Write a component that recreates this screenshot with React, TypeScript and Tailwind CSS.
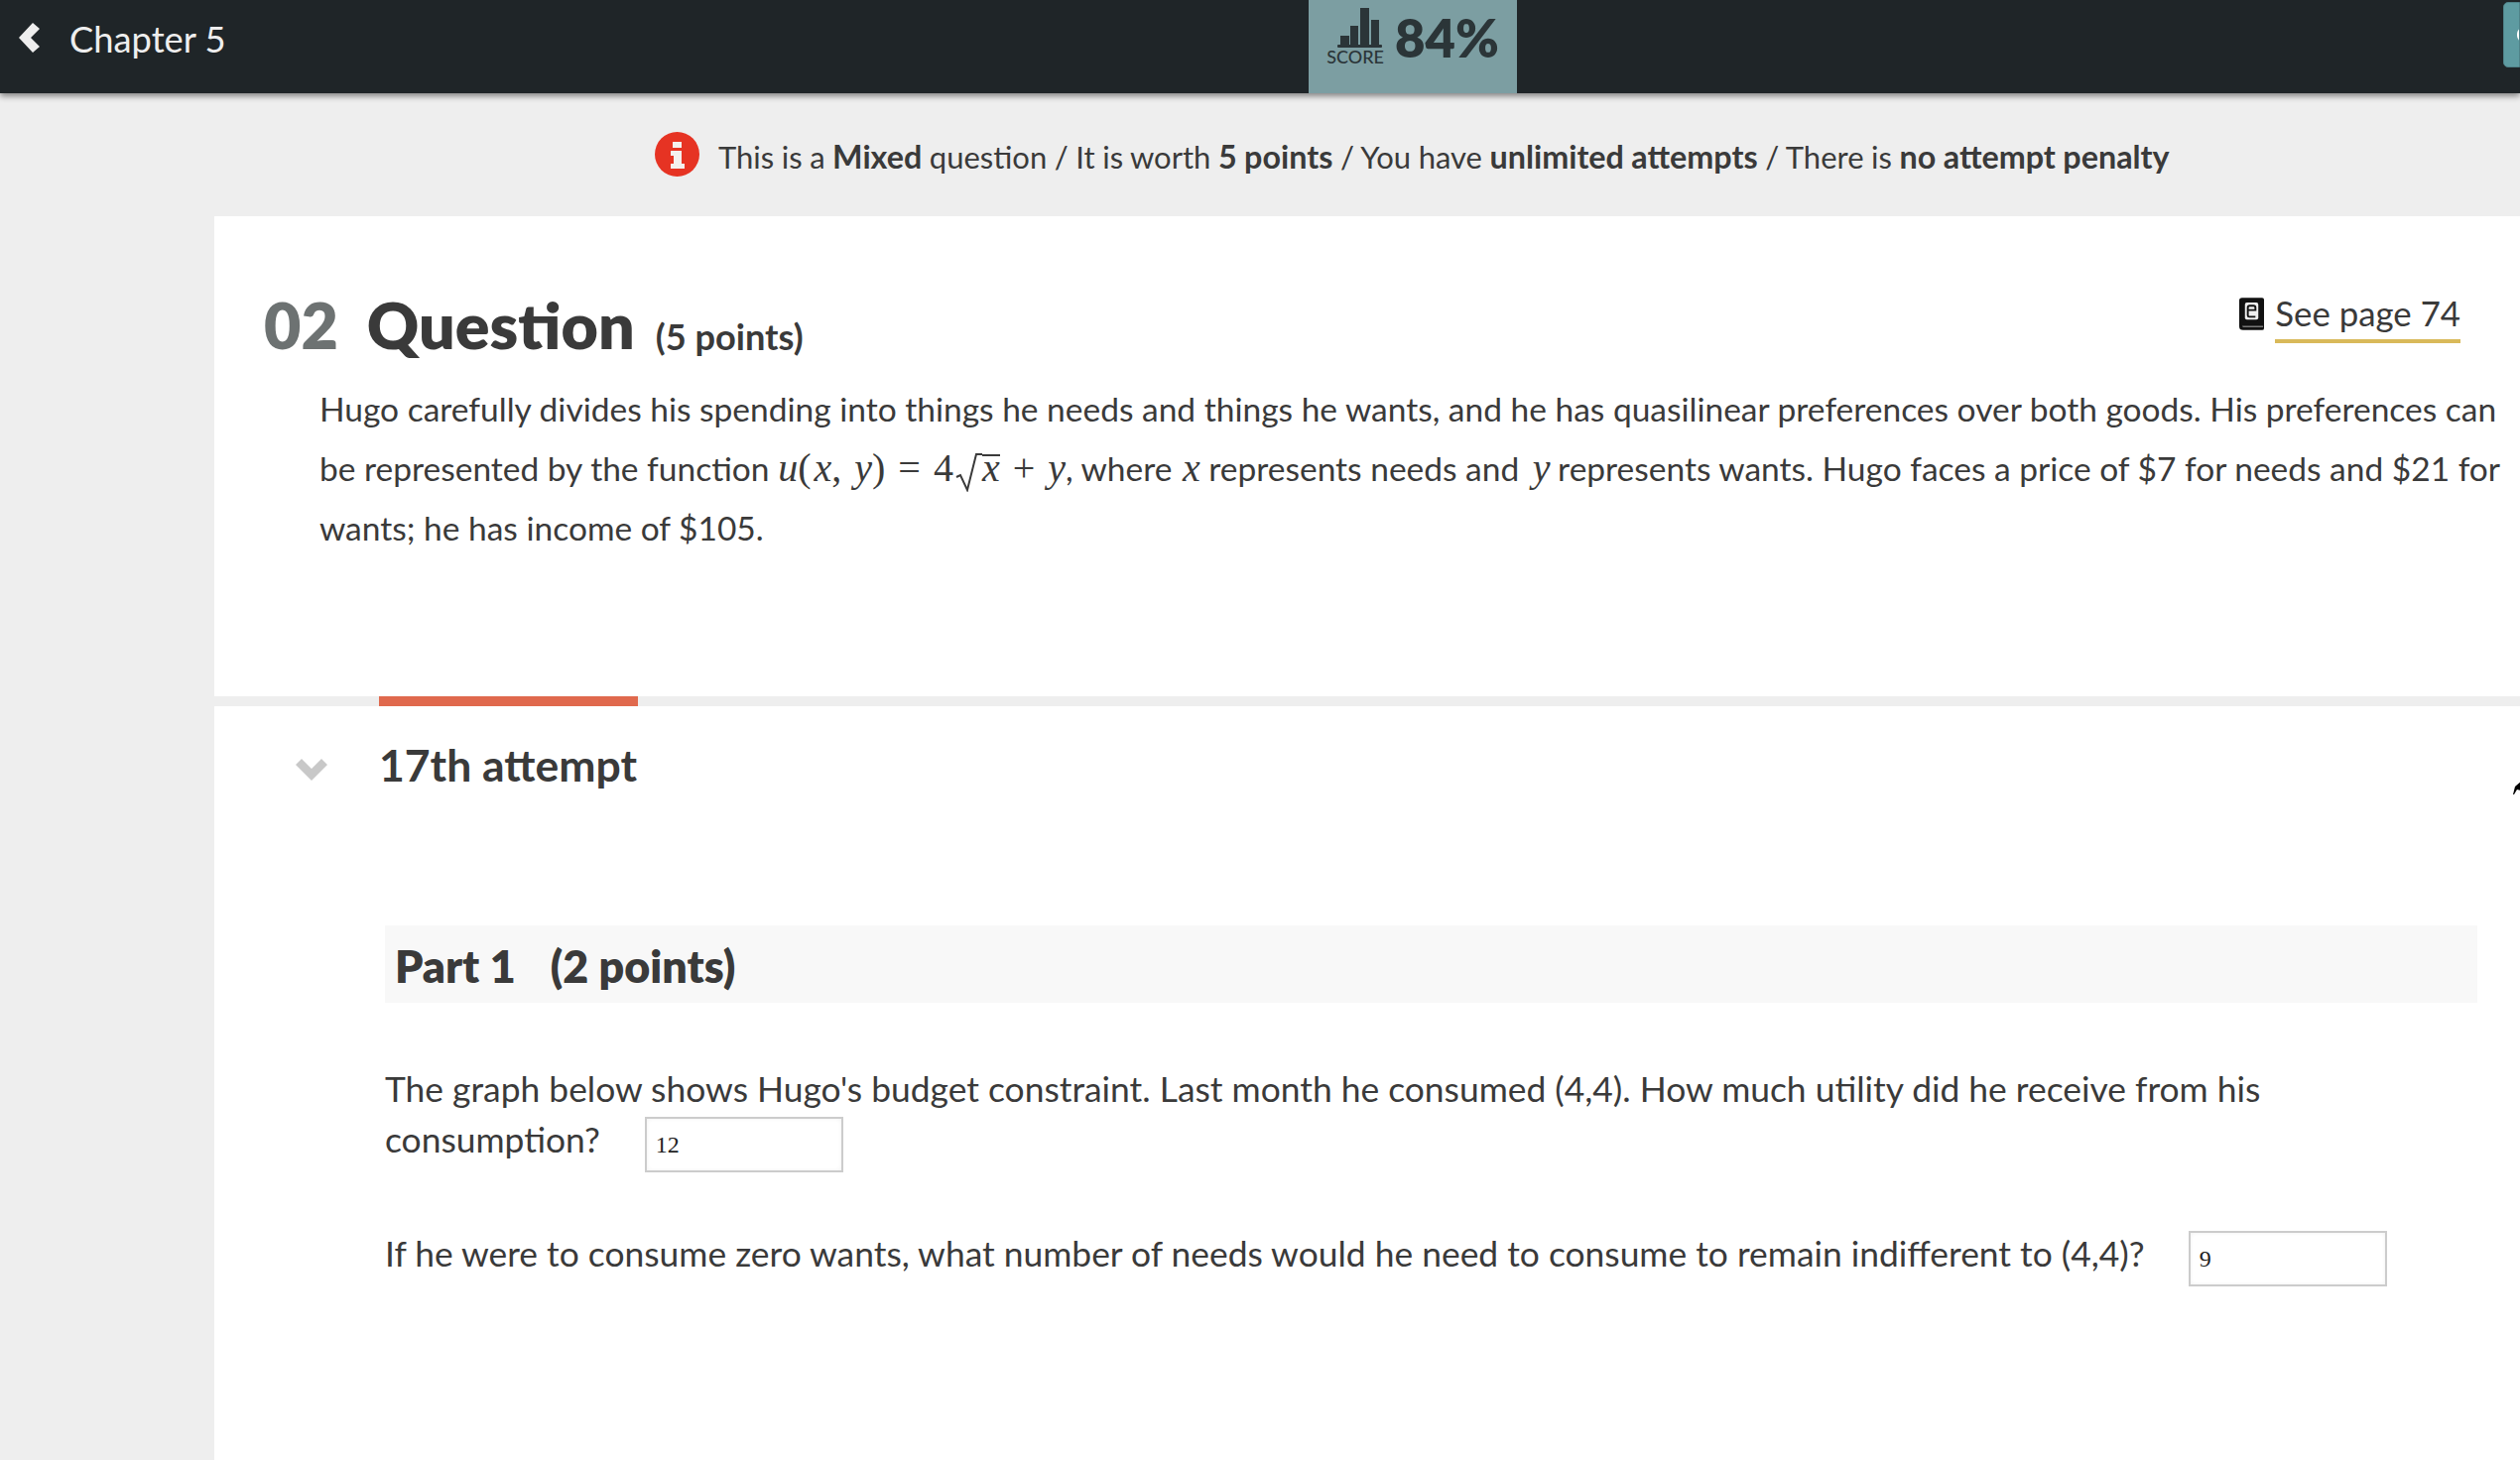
function ScoreBars() {
  return (
    <svg width="45" height="40" viewBox="0 0 45 40" className="block" fill="#2b3538">
      <rect x="3" y="28" width="9" height="10" />
      <rect x="13" y="18" width="8" height="20" />
      <rect x="23" y="0" width="9" height="38" />
      <rect x="34" y="12" width="8" height="26" />
      <rect x="0" y="37" width="45" height="3" rx="1" />
    </svg>
  );
}

function BookIcon() {
  return (
    <svg width="25" height="33" viewBox="0 0 26 34" className="block">
      <path d="M3 0h21a2 2 0 0 1 2 2v30a2 2 0 0 1-2 2H4a4 4 0 0 1-4-4V3a3 3 0 0 1 3-3z" fill="#111" />
      <path d="M3 29.500h22v1.500H4z" fill="#777" />
      <path d="M8 5h10a2 2 0 0 1 2 2v14a2 2 0 0 1-2 2H8a2 2 0 0 1-2-2V7a2 2 0 0 1 2-2z" fill="#eee" />
      <path d="M9 13h8v-2.500a2 2 0 0 0-2-2h-4a2 2 0 0 0-2 2v8a1.500 1.500 0 0 0 1.500 1.500H17" fill="none" stroke="#111" strokeWidth="2" />
    </svg>
  );
}

function Radical() {
  return (
    <svg width="29" height="39" viewBox="0 0 29 39" className="inline-block align-[-11px]" fill="none" stroke="#3a3a3a">
      <path d="M3 24l4-2 7 15L23 1h6" strokeWidth="2" />
    </svg>
  );
}

function Mi({ children }: { children: string }) {
  return <span className="italic">{children}</span>;
}

function Answer({ value }: { value: string }) {
  return (
    <span className="inline-flex items-center w-[200px] h-[56px] border-2 border-[#cccccc] bg-white pl-[9px] align-middle font-['Liberation_Serif',serif] text-[24px] text-[#222] shadow-[inset_0_0_4px_rgba(0,0,0,0.06)]">
      {value}
    </span>
  );
}

export default function App() {
  return (
    <div className="relative flex flex-col w-[2540px] h-[1472px] overflow-hidden bg-[#eeeeee] font-['Lato',sans-serif] text-[#3a3a3a]">
      <header className="relative z-10 flex h-[94px] shrink-0 bg-[#1f2528] shadow-[0_3px_6px_rgba(0,0,0,0.45)]">
        <div className="flex w-[1319px] items-start pl-[19px] pt-[16px] text-[#eeeeee]">
          <svg width="22" height="30" viewBox="0 0 22 30" className="mt-[7px] block" fill="#eeeeee">
            <path d="M0 15L14 0l7 6-9 9 9 9-7 6z" />
          </svg>
          <span className="ml-[29px] text-[36.300px] leading-[46px]">Chapter 5</span>
        </div>
        <div className="flex w-[210px] bg-[#7c9ea2] pl-[19px] text-[#2b3538]">
          <div className="flex w-[57px] flex-col items-end pt-[8px]">
            <div className="mr-[2px]"><ScoreBars /></div>
            <span className="text-[18px] font-medium leading-[18px]">SCORE</span>
          </div>
          <span className="ml-[11px] mt-[6px] text-[52.500px] font-extrabold leading-[64px]">84%</span>
        </div>
        <div className="ml-auto mt-[2px] flex h-[66px] w-[17px] items-center overflow-hidden rounded-l-[5px] border border-[#4f8389] bg-[#5e9ba1] pl-[13px]">
          <span className="h-[14px] w-[6px] shrink-0 rounded-l-full bg-white" />
        </div>
      </header>

      <div className="flex h-[124px] shrink-0 items-start pl-[660px] pt-[39px]">
        <svg width="45" height="45" viewBox="0 0 45 45" className="block">
          <circle cx="22.500" cy="22.500" r="22.500" fill="#e63323" />
          <path d="M18 10h9v6h-9zM16 19h11v13h3v5H16v-5h3v-8h-3z" fill="#f4f0ee" />
        </svg>
        <p className="ml-[19px] mt-[2px] whitespace-nowrap text-[31px] leading-[46px] [word-spacing:-0.4px]">
          This is a <b className="text-[32.300px]">Mixed</b> question / It is worth <b className="text-[32.300px]">5 points</b> / You have <b className="text-[32.300px]">unlimited attempts</b> / There is <b className="text-[32.300px]">no attempt penalty</b>
        </p>
      </div>

      <main className="ml-[216px] flex-1 bg-white">
        <section className="h-[484px] pl-[50px] pr-[22px]">
          <div className="flex items-start pt-[69px]">
            <h1 className="text-[64.500px] font-extrabold leading-[80px] text-[#3a3a3a]">
              <span className="text-[#6d7272]">02</span>
              <span className="ml-[29px]">Question</span>
            </h1>
            <span className="ml-[21px] mt-[27px] text-[36.200px] font-bold leading-[50px]">(5 points)</span>
            <div className="ml-auto mr-[38px] flex items-start pt-[6px]">
              <div className="mt-[7px]"><BookIcon /></div>
              <span className="ml-[11px] border-b-4 border-[#d9b95a] pb-[3px] text-[34.800px] leading-[46px]">See page 74</span>
            </div>
          </div>
          <p className="ml-[56px] mt-[15px] whitespace-nowrap text-[33.500px] leading-[60px]">
            Hugo carefully divides his spending into things he needs and things he wants, and he has quasilinear preferences over both goods. His preferences can
            <br />
            be represented by the function{' '}
            <span className="font-['Liberation_Serif',serif] text-[40px]">
              <Mi>u</Mi>(<span className="ml-[3px]"><Mi>x</Mi></span>,<span className="ml-[13px]"><Mi>y</Mi></span>)
              <span className="mx-[13px]">=</span>4<Radical /><span className="inline-block border-t-2 border-[#3a3a3a] leading-[24px]"><Mi>x</Mi></span>
              <span className="mx-[13px]">+</span><Mi>y</Mi>
            </span>
            , where <span className="ml-[2px] font-['Liberation_Serif',serif] text-[40px]"><Mi>x</Mi></span> represents needs and <span className="ml-[5px] mr-[-1px] font-['Liberation_Serif',serif] text-[40px]"><Mi>y</Mi></span> represents wants. Hugo faces a price of $7 for needs and $21 for
            <br />
            wants; he has income of $105.
          </p>
        </section>

        <div className="h-[10px] bg-[#eeeeee] pl-[166px]">
          <div className="h-full w-[261px] bg-[#e0694d]" />
        </div>

        <section className="flex items-start pl-[82px] pt-[30px]">
          <svg width="32" height="22" viewBox="0 0 32 22" className="mt-[23px] block" fill="#c8c8c8">
            <path d="M0 6l6-6 10 10L26 0l6 6-16 16z" />
          </svg>
          <h2 className="ml-[52px] text-[44.500px] font-bold leading-[58px]">17th attempt</h2>
        </section>

        <section className="ml-[172px] mr-[43px] mt-[133px]">
          <div className="flex h-[78px] items-center bg-[#f8f8f8] pl-[10px] pt-[5px] text-[44.800px] font-extrabold">
            <span>Part 1</span>
            <span className="ml-[35px]">(2 points)</span>
          </div>
          <p className="mt-[61px] whitespace-nowrap text-[35.400px] leading-[51px]">
            The graph below shows Hugo's budget constraint. Last month he consumed (4,4). How much utility did he receive from his
            <br />
            consumption?
            <span className="relative top-[1px] ml-[45px]"><Answer value="12" /></span>
          </p>
          <p className="mt-[55px] whitespace-nowrap text-[35.400px] leading-[56px]">
            If he were to consume zero wants, what number of needs would he need to consume to remain indifferent to (4,4)?
            <span className="relative top-[1px] ml-[44px]"><Answer value="9" /></span>
          </p>
        </section>
      </main>

      <svg width="8" height="13" viewBox="0 0 8 13" className="absolute left-[2533px] top-[788px]" fill="#000">
        <path d="M8 0v9L4 8 1 13H0L2 5z" />
      </svg>
    </div>
  );
}
